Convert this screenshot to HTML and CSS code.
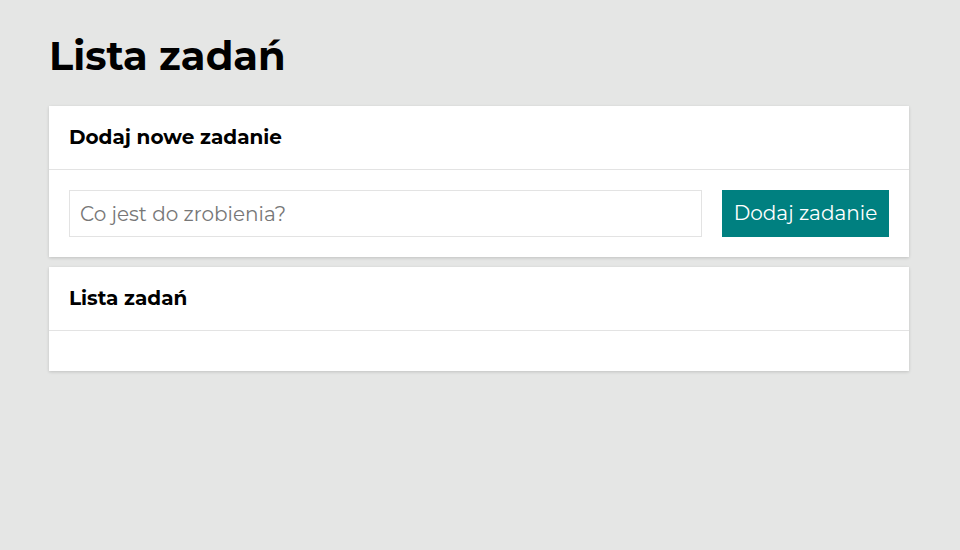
FILE: index.html
```html
<!DOCTYPE html>
<html lang="pl">
<head>
<meta charset="utf-8">
<title>Lista zadań</title>
<link rel="stylesheet" href="styles.css">
</head>
<body>
<main class="page">
  <h1 class="title">Lista zadań</h1>
  <section class="card">
    <header class="card-header">Dodaj nowe zadanie</header>
    <div class="card-body add-row">
      <input class="task-input" type="text" placeholder="Co jest do zrobienia?">
      <button class="btn" type="button">Dodaj zadanie</button>
    </div>
  </section>
  <section class="card">
    <header class="card-header">Lista zadań</header>
    <div class="card-body"></div>
  </section>
</main>
</body>
</html>
```
FILE: styles.css
```css
* { box-sizing: border-box; }
html, body { margin: 0; }
body {
  background: #e5e6e5;
  font-family: Montserrat, "DejaVu Sans", "Open Sans", sans-serif;
  color: #000;
}
.page {
  padding: 28px 51px 0 49px;
}
.title {
  margin: 0 0 22px;
  font-size: 40px;
  line-height: 56px;
  font-weight: 700;
}
.card {
  background: #fff;
  box-shadow: 0 1px 3px rgba(0,0,0,0.16);
  margin-bottom: 10px;
}
.card-header {
  height: 64px;
  padding: 0 20px 2px;
  display: flex;
  align-items: center;
  font-size: 20px;
  font-weight: 700;
  border-bottom: 1px solid #e3e3e3;
}
.card-body {
  padding: 20px;
  min-height: 40px;
}
.add-row {
  display: flex;
  gap: 20px;
}
.task-input {
  flex: 1;
  height: 47px;
  border: 1px solid #e3e3e3;
  padding: 0 10px;
  font: inherit;
  font-size: 20px;
  color: #333;
  outline: none;
}
.task-input::placeholder { color: #777; }
.btn {
  width: 167px;
  height: 47px;
  border: 0;
  background: #008080;
  color: #fff;
  font: inherit;
  font-size: 20px;
  padding: 0 0 2px;
}
```
